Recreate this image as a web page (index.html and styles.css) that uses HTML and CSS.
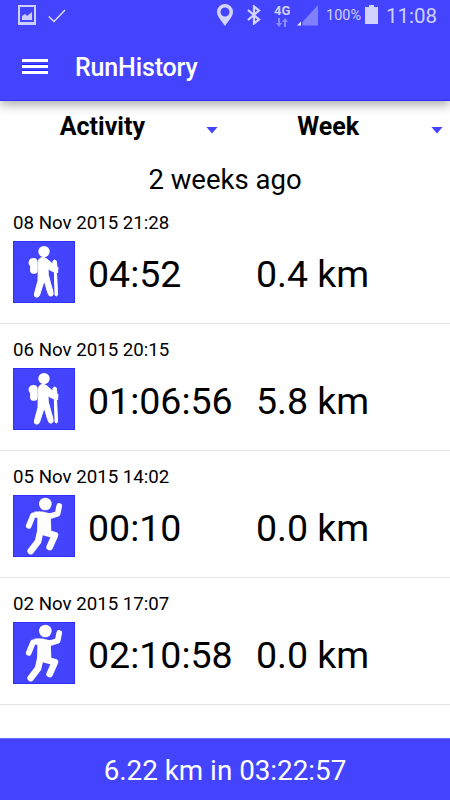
FILE: index.html
```
<!DOCTYPE html>
<html lang="en">
<head>
  <meta charset="UTF-8">
  <meta name="viewport" content="width=device-width, initial-scale=1.0">
  <title>RunHistory</title>
  <link rel="stylesheet" href="styles.css">
</head>
<body>
  <svg class="defs" width="0" height="0">
    <symbol id="walk" viewBox="0 0 186 187">
      <circle cx="93" cy="32" r="17"/>
      <path d="M61 51Q73 50 74 63V87Q74 99 65 99Q54 100 51 91V75Q44 70 48 58Q52 51 61 51Z"/>
      <path class="body" d="M85 50Q93 48 100 53L120 70L120 61Q124 54 130 60L132 77L135 80L134 95L131 98L134 163Q130 169 126 163L124 93Q112 90 105 84L106 102Q113 130 122 159Q117 170 109 165Q105 162 97 130L93 122L79 165Q72 173 65 167L64 160L75 119L76 62Q77 53 85 50Z"/>
      <path class="gap" d="M121 97L123 161"/>
    </symbol>
    <symbol id="run" viewBox="0 0 186 187">
      <circle cx="97" cy="27" r="19"/>
      <path d="M64 50H88L113 56L115 108L102 118L72 120L73 70Z"/>
      <path class="limb arm" d="M80 59L60 61L47 93M108 65L134 57L139 33"/>
      <path class="limb" d="M82 110L75 140L53 169M96 113L126 121L110 157"/>
    </symbol>
  </svg>

  <header>
    <div class="status-bar">
      <div class="status-left">
        <svg width="18" height="20" viewBox="0 0 18 20">
          <path fill="none" stroke="#cfcfff" stroke-width="2" d="M1 1h16v18H1z"/>
          <path fill="#cfcfff" d="M1 17h16v2H1zM4 15v-4l3-2 2 2 5-4v8z"/>
        </svg>
        <svg width="18" height="14" viewBox="0 0 18 14">
          <path fill="none" stroke="#dedeff" stroke-width="1.4" d="M.7 7.5L6 12.5 17 1"/>
        </svg>
      </div>
      <div class="status-right">
        <svg class="pin" width="16" height="22" viewBox="0 0 16 22">
          <path fill="#d4d4ff" fill-rule="evenodd" d="M8 0a8 8 0 0 0-8 8c0 5 5 9 8 14 3-5 8-9 8-14a8 8 0 0 0-8-8zm0 3.5a4.5 4.5 0 1 1 0 9 4.500 4.500 0 0 1 0-9z"/>
        </svg>
        <svg class="bluetooth" width="14" height="20" viewBox="0 0 14 20">
          <path fill="none" stroke="#d4d4ff" stroke-width="2.2" d="M1 5l11 9.500-5 4V1.500l5 4L1 15"/>
        </svg>
        <div class="network">
          <span>4G</span>
          <svg width="12" height="9" viewBox="0 0 12 9">
            <path fill="#8b8bff" d="M2 0h2v5h2L3 9 0 5h2zM8 9h2V4h2L9 0 6 4h2z"/>
          </svg>
        </div>
        <svg class="signal" width="21" height="21" viewBox="0 0 21 21">
          <path fill="#8080ff" d="M21 0v20.500H5.500V17z"/>
          <path fill="#e6e6ff" d="M4 16.500v4H0z"/>
        </svg>
        <span class="percent">100%</span>
        <svg class="battery" width="13" height="19" viewBox="0 0 13 19">
          <path fill="#d2d2ff" d="M4 0h5v2h4v17H0V2h4z"/>
        </svg>
        <span class="clock">11:08</span>
      </div>
    </div>
    <div class="toolbar">
      <button class="menu" aria-label="Menu"><i></i><i></i><i></i></button>
      <h1>RunHistory</h1>
    </div>
  </header>

  <section class="filters">
    <div class="filter">Activity</div>
    <div class="filter">Week</div>
  </section>

  <main>
    <h2>2 weeks ago</h2>
    <div class="entry">
      <p>08 Nov 2015 21:28</p>
      <div class="entry-content">
        <svg class="icon"><use href="#walk"/></svg>
        <span class="time">04:52</span>
        <span class="distance">0.4 km</span>
      </div>
    </div>
    <div class="entry">
      <p>06 Nov 2015 20:15</p>
      <div class="entry-content">
        <svg class="icon"><use href="#walk"/></svg>
        <span class="time">01:06:56</span>
        <span class="distance">5.8 km</span>
      </div>
    </div>
    <div class="entry">
      <p>05 Nov 2015 14:02</p>
      <div class="entry-content">
        <svg class="icon"><use href="#run"/></svg>
        <span class="time">00:10</span>
        <span class="distance">0.0 km</span>
      </div>
    </div>
    <div class="entry">
      <p>02 Nov 2015 17:07</p>
      <div class="entry-content">
        <svg class="icon"><use href="#run"/></svg>
        <span class="time">02:10:58</span>
        <span class="distance">0.0 km</span>
      </div>
    </div>
  </main>

  <footer>6.22 km in 03:22:57</footer>
</body>
</html>
```
FILE: styles.css
```
* { box-sizing: border-box; margin: 0; padding: 0; }
body {
  display: flex;
  flex-direction: column;
  height: 800px;
  font-family: Roboto, sans-serif;
  background: #fff;
  color: #000;
  overflow: hidden;
}
svg { display: block; flex-shrink: 0; }
.defs { position: absolute; }

header {
  height: 101px;
  background: #4444ff;
  color: #fff;
  border-bottom: 1px solid #3030ff;
  box-shadow: 0 4px 10px rgba(0, 0, 0, 0.32);
}
.status-bar {
  display: flex;
  justify-content: space-between;
  height: 31px;
  padding: 5px 14px 0 18px;
}
.status-left {
  display: flex;
  gap: 12px;
}
.status-left svg:last-child { margin-top: 4px; }
.status-right {
  display: flex;
  color: #d0d0ff;
}
.pin { margin: -1px 14px 0 0; }
.bluetooth { margin-right: 13px; }
.network {
  width: 17px;
  margin-right: 6px;
  font-size: 13px;
  font-weight: 700;
  line-height: 12px;
}
.network svg { margin: 1px 0 0 2px; }
.signal { margin-right: 8px; }
.percent {
  width: 36px;
  margin-right: 3px;
  font-size: 14.5px;
  line-height: 21px;
}
.battery { margin-right: 8px; }
.clock {
  width: 50px;
  font-size: 20.5px;
  line-height: 22px;
}

.toolbar {
  display: flex;
  align-items: center;
  height: 70px;
  padding: 2px 22px 0;
}
.menu {
  display: flex;
  flex-direction: column;
  gap: 3px;
  width: 26px;
  margin: 0 27px 2px 0;
  background: none;
  border: none;
}
.menu i {
  height: 3px;
  background: #fff;
}
.menu i + i { box-shadow: 0 -1px #2020ff; }
.toolbar h1 {
  font-size: 25px;
  font-weight: 500;
  letter-spacing: -0.15px;
}

.filters {
  display: flex;
  height: 56px;
}
.filter {
  display: flex;
  flex: 1;
  align-items: center;
  justify-content: flex-end;
  height: 50px;
  padding-right: 7px;
  font-size: 25px;
  font-weight: 700;
}
.filter::after {
  content: "";
  width: 12px;
  height: 7px;
  margin-top: 8px;
  background: #4444ff;
  clip-path: polygon(0 0, 100% 0, 50% 100%);
}
.filter:first-child::after { margin-left: 61px; }
.filter:last-child::after { margin-left: 72px; }

main { flex: 1; }
h2 {
  height: 40px;
  font-size: 27.5px;
  font-weight: 400;
  line-height: 46px;
  text-align: center;
}
.entry {
  height: 127px;
  padding: 14px 13px 0;
  border-bottom: 1px solid #e4e4e4;
}
.entry p {
  font-size: 18.7px;
  line-height: 24px;
}
.entry-content {
  display: flex;
  align-items: center;
  margin-top: 6px;
  font-size: 37.5px;
}
.icon {
  width: 62px;
  height: 62px;
  margin-right: 13px;
  background: #4444ff;
  box-shadow: inset 0 0 0 1px #2f2fff;
  fill: #fff;
}
.body {
  stroke: #fff;
  stroke-width: 3;
}
.limb {
  fill: none;
  stroke: #fff;
  stroke-width: 20;
  stroke-linecap: round;
  stroke-linejoin: round;
}
.arm { stroke-width: 17; }
.gap {
  stroke: #4444ff;
  stroke-width: 2;
}
.time { width: 168px; }
.time, .distance { padding-top: 4px; }

footer {
  height: 62px;
  background: #4444ff;
  color: #fff;
  border-top: 1px solid #6b6bff;
  font-size: 27.8px;
  line-height: 63px;
  text-align: center;
}
```
